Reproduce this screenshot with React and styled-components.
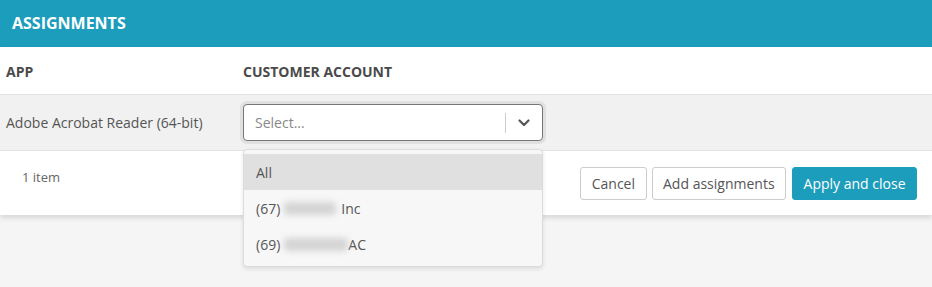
import React from 'react'
import styled, { createGlobalStyle } from 'styled-components'

const GlobalStyle = createGlobalStyle`
    html, body {
        margin: 0;
        padding: 0;
        background: #f5f5f5;
        font-family: "Open Sans", "Noto Sans", sans-serif;
    }
`

const Page = styled.div`
    width: 932px;
    min-height: 287px;
    background: #f5f5f5;
`

const Header = styled.div`
    height: 47px;
    background: #1c9dbc;
    display: flex;
    align-items: center;
    padding: 0 12px 1px;
    box-sizing: border-box;
    color: #fff;
    font-weight: 700;
    font-size: 16px;
`

const Panel = styled.div`
    background: #fff;
    box-shadow: 0 3px 5px rgba(0, 0, 0, 0.12);
`

const Grid = styled.div`
    display: grid;
    grid-template-columns: 237px 1fr;
`

const HeadCell = styled.div`
    height: 48px;
    display: flex;
    align-items: center;
    padding: 2px 6px 0;
    box-sizing: border-box;
    font-size: 14px;
    font-weight: 700;
    color: #4a4a4a;
    border-bottom: 1px solid #e2e2e2;
`

const Cell = styled.div`
    height: 56px;
    display: flex;
    align-items: center;
    padding: 0 6px;
    box-sizing: border-box;
    background: #f1f1f1;
    font-size: 14px;
    color: #555;
    border-bottom: 1px solid #e2e2e2;
`

const SelectWrap = styled.div`
    position: relative;
    width: 300px;
`

const SelectBox = styled.div`
    height: 37px;
    box-sizing: border-box;
    border: 1px solid #777;
    border-radius: 4px;
    background: #fff;
    box-shadow: 0 0 0 3px rgba(0, 0, 0, 0.07);
    display: flex;
    align-items: center;
`

const Placeholder = styled.span`
    flex: 1;
    padding-left: 11px;
    font-size: 14px;
    color: #888;
`

const Divider = styled.span`
    width: 1px;
    height: 20px;
    background: #ccc;
`

const Arrow = styled.span`
    width: 36px;
    display: flex;
    justify-content: center;
    color: #555;
`

const Menu = styled.div`
    position: absolute;
    top: 45px;
    left: 0;
    right: 0;
    z-index: 5;
    background: #f7f7f7;
    border: 1px solid #dcdcdc;
    border-radius: 4px;
    box-shadow: 0 2px 4px rgba(0, 0, 0, 0.1);
    padding: 4px 0;
`

const Option = styled.div`
    height: 36px;
    display: flex;
    align-items: center;
    padding: 0 12px;
    font-size: 14px;
    color: #555;
    background: ${p => (p.active ? '#e0e0e0' : 'transparent')};
`

const Redacted = styled.span`
    display: inline-block;
    width: ${p => p.w}px;
    height: 13px;
    margin: 0 ${p => p.gap}px 0 4px;
    background: #d4d4d4;
    border-radius: 4px;
    filter: blur(3px);
`

const Footer = styled.div`
    display: flex;
    justify-content: space-between;
    align-items: flex-start;
    padding: 16px 15px 15px 22px;
    height: 64px;
    box-sizing: border-box;
`

const Count = styled.span`
    font-size: 13px;
    line-height: 20px;
    color: #666;
`

const Actions = styled.div`
    display: flex;
    gap: 5px;
`

const Button = styled.button`
    height: 33px;
    padding: 0 10.5px;
    margin-left: ${p => (p.primary ? '1px' : '0')};
    font-family: inherit;
    font-size: 14px;
    border-radius: 3px;
    border: 1px solid ${p => (p.primary ? '#1c9dbc' : '#ccc')};
    background: ${p => (p.primary ? '#1c9dbc' : '#fff')};
    color: ${p => (p.primary ? '#fff' : '#555')};
    cursor: pointer;
`

const Chevron = () => (
    <svg width="12" height="8" viewBox="0 0 12 8">
        <polyline points="1.5,1.5 6,6 10.5,1.5" fill="none" stroke="currentColor" strokeWidth="2.2" strokeLinecap="round" strokeLinejoin="round" />
    </svg>
)

const App = () => {
    return (
        <Page>
            <GlobalStyle />
            <Header>ASSIGNMENTS</Header>
            <Panel>
                <Grid>
                    <HeadCell>APP</HeadCell>
                    <HeadCell>CUSTOMER ACCOUNT</HeadCell>
                    <Cell>Adobe Acrobat Reader (64-bit)</Cell>
                    <Cell>
                        <SelectWrap>
                            <SelectBox>
                                <Placeholder>Select...</Placeholder>
                                <Divider />
                                <Arrow><Chevron /></Arrow>
                            </SelectBox>
                            <Menu>
                                <Option active>All</Option>
                                <Option>(67)<Redacted w={52} gap={5} />Inc</Option>
                                <Option>(69)<Redacted w={64} gap={0} />AC</Option>
                            </Menu>
                        </SelectWrap>
                    </Cell>
                </Grid>
                <Footer>
                    <Count>1 item</Count>
                    <Actions>
                        <Button>Cancel</Button>
                        <Button>Add assignments</Button>
                        <Button primary>Apply and close</Button>
                    </Actions>
                </Footer>
            </Panel>
        </Page>
    )
}

export default App
